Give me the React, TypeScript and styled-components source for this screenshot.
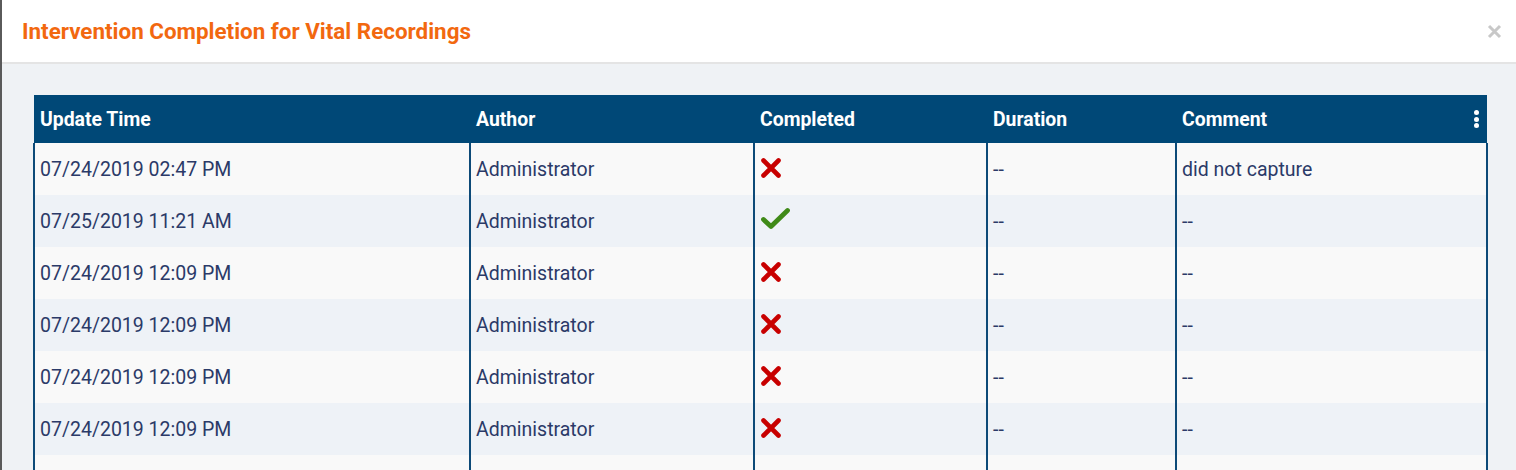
import styled, { createGlobalStyle } from 'styled-components'

const GlobalStyle = createGlobalStyle`
  html, body {
    margin: 0;
    padding: 0;
    height: 100%;
    overflow: hidden;
    background: #eff2f5;
  }
  body {
    font-family: Roboto, 'Noto Sans', Arial, sans-serif;
  }
`

type Row = {
  time: string
  author: string
  completed: boolean
  duration: string
  comment: string
}

const rows: Row[] = [
  { time: '07/24/2019 02:47 PM', author: 'Administrator', completed: false, duration: '--', comment: 'did not capture' },
  { time: '07/25/2019 11:21 AM', author: 'Administrator', completed: true, duration: '--', comment: '--' },
  { time: '07/24/2019 12:09 PM', author: 'Administrator', completed: false, duration: '--', comment: '--' },
  { time: '07/24/2019 12:09 PM', author: 'Administrator', completed: false, duration: '--', comment: '--' },
  { time: '07/24/2019 12:09 PM', author: 'Administrator', completed: false, duration: '--', comment: '--' },
  { time: '07/24/2019 12:09 PM', author: 'Administrator', completed: false, duration: '--', comment: '--' },
]

const columns = [
  { label: 'Update Time', width: 436 },
  { label: 'Author', width: 284 },
  { label: 'Completed', width: 233 },
  { label: 'Duration', width: 189 },
  { label: 'Comment', width: undefined },
]

const Modal = styled.div`
  height: 100vh;
  border-left: 2px solid #5a5a5a;
  display: flex;
  flex-direction: column;
  background: #eff2f5;
`

const Header = styled.div`
  height: 62px;
  flex: none;
  background: #fff;
  border-bottom: 2px solid #e4e4e4;
  display: flex;
  align-items: center;
  justify-content: space-between;
  padding: 0 14px 0 20px;
`

const Title = styled.h1`
  margin: 0;
  font-size: 22.4px;
  font-weight: 700;
  color: #f2680f;
`

const CloseButton = styled.button`
  border: 0;
  background: none;
  padding: 0;
  width: 16px;
  height: 16px;
  display: flex;
  align-items: center;
  justify-content: center;
  cursor: pointer;
`

const Body = styled.div`
  padding: 31px 28px 0 31px;
`

const Table = styled.table`
  width: 100%;
  border-collapse: collapse;
  table-layout: fixed;
`

const HeadCell = styled.th`
  height: 48px;
  padding: 0 6px;
  background: #004877;
  color: #fff;
  font-size: 19.4px;
  font-weight: 700;
  text-align: left;
  position: relative;
`

const BodyRow = styled.tr<{ $alt: boolean }>`
  background: ${(p) => (p.$alt ? '#eef2f7' : '#f9f9f9')};
`

const Cell = styled.td`
  height: 52px;
  padding: 0 6px 0 5px;
  border-left: 2px solid #0d4a78;
  border-right: 2px solid #0d4a78;
  color: #2b3a68;
  font-size: 19.5px;
  vertical-align: middle;
  box-sizing: border-box;
  white-space: nowrap;
`

const IconWrap = styled.span`
  display: inline-flex;
  align-items: center;
  height: 24px;
`

const Kebab = styled.span`
  position: absolute;
  right: 8px;
  top: 50%;
  transform: translateY(-50%);
  display: flex;
  flex-direction: column;
  gap: 1.5px;
`

const Dot = styled.span`
  width: 5px;
  height: 5px;
  border-radius: 50%;
  background: #fff;
`

const CrossIcon = () => (
  <svg width="22" height="20" viewBox="0 0 22 20">
    <path d="M3.5 2.5 L18.5 17.5 M18.5 2.5 L3.5 17.5" stroke="#c80000" strokeWidth="4.6" strokeLinecap="round" />
  </svg>
)

const CheckIcon = () => (
  <svg width="31" height="23" viewBox="0 0 31 23">
    <path d="M3.5 12.5 L11 19.5 L27.5 3.5" stroke="#3f8a18" strokeWidth="4.8" strokeLinecap="round" strokeLinejoin="round" fill="none" />
  </svg>
)

export default function App() {
  return (
    <>
      <GlobalStyle />
      <Modal>
        <Header>
          <Title>Intervention Completion for Vital Recordings</Title>
          <CloseButton aria-label="close">
            <svg width="15" height="15" viewBox="0 0 15 15">
              <path d="M2 2 L13 13 M13 2 L2 13" stroke="#c8c8c8" strokeWidth="3" />
            </svg>
          </CloseButton>
        </Header>
        <Body>
          <Table>
            <colgroup>
              {columns.map((c) => (
                <col key={c.label} style={c.width ? { width: c.width } : undefined} />
              ))}
            </colgroup>
            <thead>
              <tr>
                {columns.map((c, i) => (
                  <HeadCell key={c.label}>
                    {c.label}
                    {i === columns.length - 1 && (
                      <Kebab>
                        <Dot />
                        <Dot />
                        <Dot />
                      </Kebab>
                    )}
                  </HeadCell>
                ))}
              </tr>
            </thead>
            <tbody>
              {rows.map((r, i) => (
                <BodyRow key={i} $alt={i % 2 === 1}>
                  <Cell>{r.time}</Cell>
                  <Cell>{r.author}</Cell>
                  <Cell>
                    <IconWrap>{r.completed ? <CheckIcon /> : <CrossIcon />}</IconWrap>
                  </Cell>
                  <Cell>{r.duration}</Cell>
                  <Cell>{r.comment}</Cell>
                </BodyRow>
              ))}
              <BodyRow $alt={false}>
                {columns.map((c) => (
                  <Cell key={c.label} />
                ))}
              </BodyRow>
            </tbody>
          </Table>
        </Body>
      </Modal>
    </>
  )
}
